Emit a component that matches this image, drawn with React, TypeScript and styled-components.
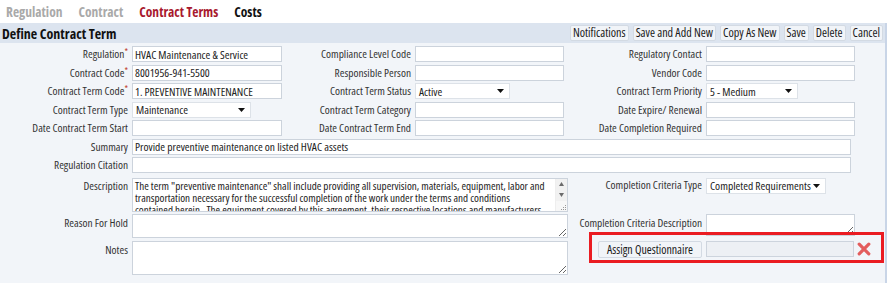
import React from "react";
import styled, { createGlobalStyle } from "styled-components";

const FONT = `"Open Sans", "Liberation Sans", Arial, sans-serif`;

const GlobalStyle = createGlobalStyle`
  html, body { margin: 0; padding: 0; background: #ffffff; }
  body { font-family: ${FONT}; font-stretch: condensed; color: #333; }
  * { box-sizing: border-box; }
  input, textarea, button { font-stretch: condensed; }
`;

const Page = styled.div`
  width: 889px;
  height: 283px;
  overflow: hidden;
  background: #fff;
`;

const Tabs = styled.nav`
  display: flex;
  align-items: center;
  gap: 16px;
  height: 23px;
  padding: 0 6px;
`;

const Tab = styled.span<{ $state: "muted" | "active" | "normal" }>`
  font-weight: bold;
  font-size: 13.5px;
  color: ${(p) => (p.$state === "muted" ? "#a9a9a9" : p.$state === "active" ? "#a8192e" : "#111")};
`;

const Panel = styled.section`
  width: 887px;
  height: 260px;
  border-right: 2px solid #c9d5e7;
  background: #f2f5f9;
`;

const HeaderBar = styled.header`
  display: flex;
  align-items: center;
  justify-content: space-between;
  height: 20px;
  padding: 0 2px;
  background: #dce4ef;
`;

const Title = styled.h1`
  margin: 0;
  font-size: 14px;
  font-weight: bold;
  color: #111;
`;

const Actions = styled.div`
  display: flex;
  gap: 4px;
`;

const ActionButton = styled.button`
  height: 16px;
  padding: 0 2px;
  border: 1px solid #d3dae3;
  border-radius: 2px;
  background: #f1f4f8;
  font-family: ${FONT};
  font-size: 12.1px;
  line-height: 14px;
  color: #1a1a1a;
`;

const Form = styled.div`
  display: grid;
  grid-template-columns: 128px 150px 125px 149px 134px 149px;
  column-gap: 4px;
  row-gap: 2.5px;
  padding-top: 3px;
`;

const Label = styled.label<{ $top?: number }>`
  justify-self: end;
  align-self: ${(p) => (p.$top !== undefined ? "start" : "center")};
  padding-top: ${(p) => p.$top ?? 0}px;
  font-size: 11.35px;
  line-height: 14px;
  color: #333;
  white-space: nowrap;
`;

const Req = styled.span`
  color: #c0392b;
  font-size: 9px;
  vertical-align: top;
  line-height: 10px;
`;

const TextInput = styled.input<{ $span?: number; $trim?: number }>`
  grid-column: span ${(p) => p.$span ?? 1};
  width: ${(p) => (p.$trim ? `calc(100% - ${p.$trim}px)` : "100%")};
  height: 16px;
  padding: 0 2px;
  border: 1px solid #ccd3dc;
  background: #fff;
  font-family: ${FONT};
  font-size: 11.5px;
  color: #222;
  outline: none;
`;

const SelectBox = styled.div<{ $width: number }>`
  display: flex;
  align-items: center;
  justify-content: space-between;
  width: ${(p) => p.$width}px;
  height: 16px;
  padding: 0 5px 0 3px;
  border: 1px solid #dde2e8;
  background: #fff;
  font-size: 11.5px;
  color: #222;
  align-self: start;
  white-space: nowrap;
`;

const Caret = () => (
  <svg width="7" height="4" viewBox="0 0 7 4">
    <path d="M0 0 L7 0 L3.5 4 Z" fill="#111" />
  </svg>
);

const TextArea = styled.textarea<{ $height: number; $width: number; $mt?: number }>`
  grid-column: span 3;
  width: ${(p) => p.$width}px;
  height: ${(p) => p.$height}px;
  margin: ${(p) => p.$mt ?? 0}px 0 0 0;
  padding: 1px 3px;
  border: 1px solid #ccd3dc;
  background: #fff;
  font-family: ${FONT};
  font-size: 11.2px;
  line-height: 12px;
  color: #222;
  overflow: hidden;
  resize: both;
  outline: none;
`;

const SmallArea = styled(TextArea)`
  grid-column: span 1;
`;

const ScrollArea = styled.div<{ $height: number; $width: number; $mt?: number }>`
  grid-column: span 3;
  display: flex;
  width: ${(p) => p.$width}px;
  height: ${(p) => p.$height}px;
  margin-top: ${(p) => p.$mt ?? 0}px;
  border: 1px solid #ccd3dc;
  background: #fff;
  overflow: hidden;
`;

const InnerText = styled.textarea`
  flex: 1;
  min-width: 0;
  height: 100%;
  margin: 0;
  padding: 1px 1px 1px 2px;
  border: 0;
  background: transparent;
  font-family: ${FONT};
  font-size: 11.1px;
  line-height: 12px;
  color: #222;
  overflow: hidden;
  resize: none;
  outline: none;
`;

const ScrollTrack = styled.div`
  display: flex;
  flex-direction: column;
  align-items: center;
  width: 12px;
  flex: none;
  background: #f7f7f7;
  border-left: 1px solid #eeeeee;
`;

const ScrollButton = styled.div`
  display: flex;
  align-items: center;
  justify-content: center;
  width: 100%;
  height: 11px;
  background: #f1f1f1;
`;

const Grip = styled.div`
  display: flex;
  justify-content: flex-end;
  align-items: flex-end;
  margin-top: auto;
  width: 100%;
  padding: 0 1px 1px 0;
`;

const Arrow = ({ dir }: { dir: "up" | "down" }) => (
  <svg width="5" height="4" viewBox="0 0 5 4">
    <path d={dir === "up" ? "M0 4 L5 4 L2.5 0 Z" : "M0 0 L5 0 L2.5 4 Z"} fill="#6b6b6b" />
  </svg>
);

const GripIcon = () => (
  <svg width="6" height="6" viewBox="0 0 6 6">
    <rect x="5" y="1" width="1" height="1" fill="#999" />
    <rect x="3" y="3" width="1" height="1" fill="#999" />
    <rect x="5" y="3" width="1" height="1" fill="#999" />
    <rect x="1" y="5" width="1" height="1" fill="#999" />
    <rect x="3" y="5" width="1" height="1" fill="#999" />
    <rect x="5" y="5" width="1" height="1" fill="#999" />
  </svg>
);

const QuestionnaireRow = styled.div`
  grid-column: span 2;
  justify-self: start;
  align-self: start;
  position: relative;
  display: flex;
  align-items: center;
  gap: 4px;
  width: 274px;
  height: 17px;
  margin-left: 30px;
  &::after {
    content: "";
    position: absolute;
    left: -9px;
    right: -12px;
    top: -9px;
    bottom: -5px;
    border: 3px solid #ea1c22;
    pointer-events: none;
  }
`;

const AssignButton = styled(ActionButton)`
  width: 104px;
  height: 17px;
  padding: 0;
  font-size: 11.9px;
  flex: none;
`;

const DisabledInput = styled.input`
  width: 148px;
  height: 16px;
  flex: none;
  border: 1px solid #cdd4dd;
  background: #edf0f4;
`;

const RemoveIcon = () => (
  <svg width="14" height="14" viewBox="0 0 14 14" style={{ flex: "none", marginLeft: -1 }}>
    <path d="M2.2 2.2 L11.8 11.8 M11.8 2.2 L2.2 11.8" stroke="#e35d5d" strokeWidth="3.2" strokeLinecap="round" />
  </svg>
);

const descriptionText =
  'The term "preventive maintenance" shall include providing all supervision, materials, equipment, labor and\ntransportation necessary for the successful completion of the work under the terms and conditions\ncontained herein.  The equipment covered by this agreement, their respective locations and manufacturers are listed in the attached schedule.';

const Field = ({ label, required }: { label: string; required?: boolean }) => (
  <Label>
    {label}
    {required && <Req>*</Req>}
  </Label>
);

export default function App() {
  return (
    <Page>
      <GlobalStyle />
      <Tabs>
        <Tab $state="muted">Regulation</Tab>
        <Tab $state="muted">Contract</Tab>
        <Tab $state="active">Contract Terms</Tab>
        <Tab $state="normal">Costs</Tab>
      </Tabs>
      <Panel>
        <HeaderBar>
          <Title>Define Contract Term</Title>
          <Actions>
            <ActionButton>Notifications</ActionButton>
            <ActionButton>Save and Add New</ActionButton>
            <ActionButton>Copy As New</ActionButton>
            <ActionButton>Save</ActionButton>
            <ActionButton>Delete</ActionButton>
            <ActionButton>Cancel</ActionButton>
          </Actions>
        </HeaderBar>
        <Form>
          <Field label="Regulation" required />
          <TextInput defaultValue="HVAC Maintenance & Service" />
          <Field label="Compliance Level Code" />
          <TextInput />
          <Field label="Regulatory Contact" />
          <TextInput />

          <Field label="Contract Code" required />
          <TextInput defaultValue="8001956-941-5500" />
          <Field label="Responsible Person" />
          <TextInput />
          <Field label="Vendor Code" />
          <TextInput />

          <Field label="Contract Term Code" required />
          <TextInput defaultValue="1. PREVENTIVE MAINTENANCE" />
          <Field label="Contract Term Status" />
          <SelectBox $width={95}>
            <span>Active</span>
            <Caret />
          </SelectBox>
          <Field label="Contract Term Priority" />
          <SelectBox $width={92}>
            <span>5 - Medium</span>
            <Caret />
          </SelectBox>

          <Field label="Contract Term Type" />
          <SelectBox $width={119}>
            <span>Maintenance</span>
            <Caret />
          </SelectBox>
          <Field label="Contract Term Category" />
          <TextInput />
          <Field label="Date Expire/ Renewal" />
          <TextInput />

          <Field label="Date Contract Term Start" />
          <TextInput />
          <Field label="Date Contract Term End" />
          <TextInput />
          <Field label="Date Completion Required" />
          <TextInput />

          <Field label="Summary" />
          <TextInput $span={5} $trim={4} defaultValue="Provide preventive maintenance on listed HVAC assets" />

          <Field label="Regulation Citation" />
          <TextInput $span={5} $trim={4} />

          <Label $top={3}>Description</Label>
          <ScrollArea $width={436} $height={34} $mt={2}>
            <InnerText readOnly defaultValue={descriptionText} />
            <ScrollTrack>
              <ScrollButton>
                <Arrow dir="up" />
              </ScrollButton>
              <ScrollButton>
                <Arrow dir="down" />
              </ScrollButton>
              <Grip>
                <GripIcon />
              </Grip>
            </ScrollTrack>
          </ScrollArea>
          <Label $top={2}>Completion Criteria Type</Label>
          <SelectBox $width={120} style={{ marginTop: 2 }}>
            <span>Completed Requirements</span>
            <Caret />
          </SelectBox>

          <Label $top={2}>Reason For Hold</Label>
          <TextArea $width={436} $height={24} />
          <Label $top={2}>Completion Criteria Description</Label>
          <SmallArea $width={149} $height={22} />

          <Label $top={2}>Notes</Label>
          <TextArea $width={436} $height={34} />
          <QuestionnaireRow>
            <AssignButton>Assign Questionnaire</AssignButton>
            <DisabledInput disabled />
            <RemoveIcon />
          </QuestionnaireRow>
        </Form>
      </Panel>
    </Page>
  );
}
